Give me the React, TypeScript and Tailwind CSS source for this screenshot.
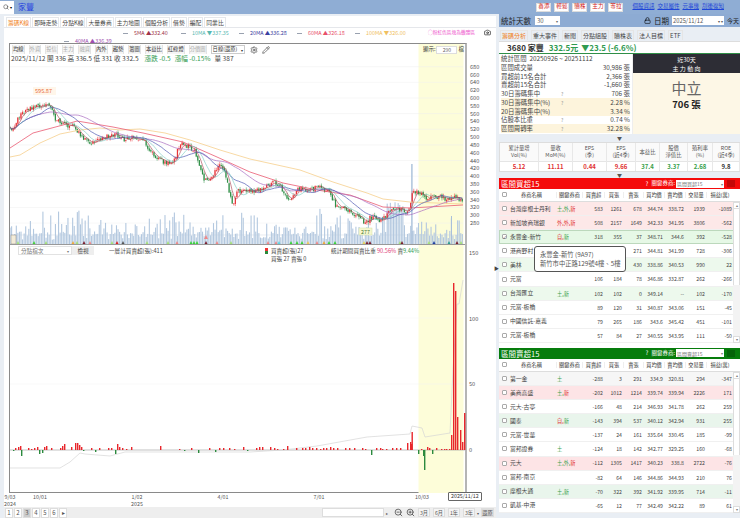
import { Search, Lock, Settings, Pencil, ZoomIn, ZoomOut, Camera } from "lucide-react";

// seeded random so the chart is the same on every load
let seed = 37;
const rnd = () => {
    seed = (seed * 16807) % 2147483647;
    return seed / 2147483647;
};

const interp = (pts: number[][], x: number) => {
    for (let i = 1; i < pts.length; i++) {
        if (x <= pts[i][0]) {
            const [x0, y0] = pts[i - 1];
            const [x1, y1] = pts[i];
            return y0 + ((y1 - y0) * (x - x0)) / (x1 - x0);
        }
    }
    return pts[pts.length - 1][1];
};

const pricePts = [
    [10, 130], [15, 124], [20, 116], [25, 112], [30, 108], [35, 105], [40, 108], [45, 104], [50, 106], [55, 118], [60, 122], [65, 125],
    [70, 125], [75, 127], [80, 135], [85, 140], [90, 143], [95, 143], [100, 140], [105, 137], [110, 136], [115, 134], [120, 138], [125, 140],
    [130, 137], [135, 138], [140, 140], [145, 142], [150, 150], [155, 155], [160, 160], [165, 162], [170, 163], [175, 160], [178, 148],
    [182, 143], [186, 145], [190, 148], [195, 150], [200, 170], [205, 180], [210, 178], [215, 172], [220, 165], [225, 172], [230, 195],
    [233, 206], [238, 190], [243, 192], [250, 190], [255, 192], [260, 190], [265, 188], [270, 185], [275, 182], [280, 187], [285, 195],
    [290, 198], [295, 192], [300, 188], [305, 190], [310, 190], [315, 188], [320, 187], [325, 190], [330, 192], [335, 205], [340, 208],
    [345, 210], [350, 212], [355, 215], [360, 218], [365, 224], [370, 218], [375, 218], [380, 220], [385, 218], [390, 210], [395, 207],
    [400, 210], [405, 212], [410, 208], [413, 190], [417, 192], [425, 198], [430, 196], [435, 198], [440, 195], [445, 200], [450, 200],
    [455, 198], [460, 200], [464, 202],
];
const ma60Pts = [[10, 148], [33, 133], [63, 125], [77, 121], [113, 127], [143, 133], [183, 142], [217, 157], [250, 172], [283, 183], [317, 190], [350, 195], [383, 207], [410, 208], [463, 205]];
const ma100Pts = [[10, 157], [20, 155], [40, 143], [60, 134], [80, 130], [100, 128], [120, 130], [140, 129], [165, 133], [190, 140], [220, 150], [250, 159], [300, 170], [333, 182], [367, 193], [383, 199], [410, 202], [463, 204]];

const bars = Array.from({ length: 290 }, (_, i) => {
    const x = 10 + i * 1.565;
    const c = interp(pricePts, x) + (rnd() - 0.5) * 5;
    return { x, c };
});
const candles = bars.map((b, i) => {
    const o = i === 0 ? b.c : bars[i - 1].c + (rnd() - 0.5) * 2;
    const top = Math.min(o, b.c) - rnd() * 2.5;
    const bot = Math.max(o, b.c) + rnd() * 2.5;
    const vol = i > 240 && i < 252 ? 28 + rnd() * 16 : 5 + rnd() * rnd() * 30 + rnd() * 6;
    return { x: b.x, o, c: b.c, top, bot, vol };
});
const maLine = (w: number) =>
    bars
        .map((b, i) => {
            const part = bars.slice(Math.max(0, i - w + 1), i + 1);
            return `${b.x.toFixed(1)},${(part.reduce((s, p) => s + p.c, 0) / part.length).toFixed(1)}`;
        })
        .join(" ");
const ptLine = (pts: number[][]) => pts.map((p) => p.join(",")).join(" ");

const markers: [number, string][] = [
    [18, "#a5e07a"], [34, "#44d13c"], [46, "#a5e07a"], [73, "#f2a93b"], [77, "#a5e07a"], [84, "#7a1f2e"], [90, "#e88"], [112, "#a5e07a"], [117, "#d22"], [123, "#555"],
    [147, "#a5e07a"], [168, "#a5e07a"], [177, "#e88"], [191, "#3ad33a"], [194, "#3ad33a"], [197, "#3ad33a"], [206, "#7a1f2e"], [217, "#e88"], [231, "#a5e07a"],
    [268, "#e88"], [276, "#e88"], [279, "#5cd3e0"], [291, "#3ad33a"], [297, "#3ad33a"], [302, "#3ad33a"], [308, "#f2c75a"], [317, "#e88"], [324, "#f2a93b"], [329, "#3ad33a"], [335, "#3ad33a"],
    [364, "#e8d45a"], [367, "#7a1f2e"], [370, "#7a1f2e"], [400, "#a5e07a"], [402, "#7a1f2e"], [429, "#a5e07a"], [434, "#1f3fa0"], [449, "#2a9d8f"], [457, "#7a1f2e"], [461, "#a5e07a"],
];

// broker net buy bars: x, height in px (negative goes down)
const netBars: [number, number][] = [
    [13, -1], [15, 2], [18, 3], [20, 4], [21, -6], [28, 2], [31, 1], [34, 2], [37, 3], [39, -4], [42, -3], [44, 3], [46, 4], [51, 2], [60, 2], [62, 4], [64, 6], [71, 3],
    [75, 7], [77, 7], [79, 5], [81, 3], [83, -1], [91, 2], [95, -2], [99, 2], [108, 2], [111, 2], [115, -4], [117, 6], [119, 3], [122, 2], [126, 1], [131, 3], [160, 4], [179, 1],
    [184, -1], [191, 2], [198, -3], [209, 2], [215, -2], [219, 2], [223, 2], [229, 2], [234, 1], [243, 3], [247, -1], [256, 2], [259, 3], [262, 3], [270, 3], [274, 2], [277, 1], [283, 1],
    [287, 4], [296, 2], [302, 2], [305, 2], [309, 3], [312, 2], [316, 2], [320, 1], [323, 2], [326, 2], [330, 3], [333, 2], [337, 2], [345, 2], [349, 2], [354, 2], [362, 2], [371, -5],
    [376, 2], [382, 1], [386, 1], [392, 2], [400, 2], [407, 7], [411, 6], [396, 2], [380, 2], [365, 1], [410, 8], [411.5, 18], [418, -4], [423, -6], [424, -20], [421, 1], [427, 3], [429, 2], [432, -4], [436, 2],
    [441, 1], [444, 1], [446, 1], [449, 1], [451, 15], [453, 167], [455, 159], [457, 33], [460, 20], [462, 8], [464, 37],
];
const grayLine = [[10, 468], [60, 468], [70, 462], [80, 453], [85, 454], [110, 456], [125, 452], [250, 452], [283, 450], [317, 446], [367, 437], [410, 434], [412, 426], [422, 428], [425, 437], [450, 433], [453, 370], [457, 304], [459, 304], [463, 280]];

const yUp = (p: number) => 66.7 + (680 - p) * 0.391;
const priceTicks = [680, 660, 640, 620, 600, 580, 560, 540, 520, 500, 480, 460, 440, 420, 400, 380, 360, 340, 320, 300, 280];

function ChartDrawing() {
    return (
        <svg className="absolute left-0 top-0" width={490} height={452} viewBox="10 44 490 452">
            <rect x={418.5} y={44} width={45} height={449} fill="#fdfdd9" />
            {[680, 640, 600, 560, 520, 480, 440, 400, 360, 320, 280].map((p) => (
                <line key={p} x1={10} x2={463} y1={yUp(p)} y2={yUp(p)} stroke="#eeeeee" strokeWidth={0.5} />
            ))}
            <line x1={10} x2={463} y1={384} y2={384} stroke="#f0f0f0" strokeWidth={0.5} />
            <line x1={10} x2={463} y1={318} y2={318} stroke="#f4f4f4" strokeWidth={0.5} />
            <line x1={10} x2={463} y1={235} y2={235} stroke="#d8dfe8" strokeWidth={0.6} />

            {candles.map((c, i) => (
                <rect key={i} x={c.x - 0.5} y={245 - c.vol} width={1.1} height={c.vol} fill="#b3c8df" />
            ))}
            <rect x={411.2} y={164} width={1.4} height={81} fill="#a9c0da" />
            <rect x={451} y={216} width={1} height={29} fill="#a9c0da" />
            <rect x={11} y={235} width={5} height={9} fill="#f3ecd8" stroke="#888" strokeWidth={0.5} />

            {candles.map((c, i) => {
                const up = c.c < c.o;
                const col = up ? "#e8353a" : "#2f8f47";
                return (
                    <g key={i}>
                        <line x1={c.x} x2={c.x} y1={c.top} y2={c.bot} stroke={col} strokeWidth={0.5} />
                        <rect x={c.x - 0.6} y={Math.min(c.o, c.c)} width={1.2} height={Math.max(0.5, Math.abs(c.o - c.c))} fill={col} />
                    </g>
                );
            })}
            <polyline points={ptLine(ma100Pts)} fill="none" stroke="#f6cf8d" strokeWidth={0.8} />
            <polyline points={ptLine(ma60Pts)} fill="none" stroke="#ea5a72" strokeWidth={0.8} />
            <polyline points={maLine(40)} fill="none" stroke="#a868c0" strokeWidth={0.7} />
            <polyline points={maLine(20)} fill="none" stroke="#4a55b0" strokeWidth={0.7} />
            <polyline points={maLine(10)} fill="none" stroke="#70c8c0" strokeWidth={0.6} />
            <polyline points={maLine(5)} fill="none" stroke="#a83a4a" strokeWidth={0.6} />

            {markers.map(([x, col], i) => (
                <polygon key={i} points={`${x - 2},245 ${x + 2},245 ${x},241`} fill={col} />
            ))}
            <polygon points="204,239 208,239 206,235" fill="#e88" />

            <g fontSize={5.6} fill="#555">
                {priceTicks.map((p) => (
                    <text key={p} x={470} y={yUp(p) + 2}>{p}</text>
                ))}
                <text x={469} y={255}>150</text>
                <text x={469} y={320.5}>100</text>
                <text x={469} y={386}>50</text>
                <text x={469} y={452}>0</text>
            </g>

            <rect x={33} y={87} width={23} height={8} fill="#fff6ea" />
            <text x={35} y={93} fontSize={5.6} fill="#e86a3a">595.87</text>
            <rect x={359} y={228} width={13} height={7} fill="#f7f7d0" stroke="#cfe0a8" strokeWidth={0.5} />
            <text x={361} y={233.5} fontSize={5.4} fill="#4a7a30">277</text>

            <line x1={10} x2={465} y1={450} y2={450} stroke="#999" strokeWidth={0.6} />
            <polyline points={ptLine(grayLine)} fill="none" stroke="#d6d6d6" strokeWidth={0.7} />
            {netBars.map(([x, h], i) => (
                <rect key={i} x={x} y={h > 0 ? 450 - h : 450} width={1.4} height={Math.abs(h)} fill={h > 0 ? "#e8262c" : "#2b8a3e"} />
            ))}
        </svg>
    );
}

const leftTabs = ["籌碼K線", "即時走勢", "分點K線", "大量券商", "主力地圖", "個股分析", "借勢", "編配", "同業比"];
const toolBtns = [
    ["均線", false], ["外資", true], ["投信", true], ["主力", true], ["融資", true], ["內外", false], ["趨勢", false], ["籌圖", false], ["本益比", false], ["紅綠燈", false], ["分價圖", true],
] as [string, boolean][];

function LegendItem({ name, val, color }: { name: string; val: string; color: string }) {
    return (
        <span className="flex items-center gap-[6px] w-[58px] h-[8px] leading-[8px]" style={{ color }}>
            <span className="w-[5px] h-px bg-gray-400 shrink-0" />
            <span className="whitespace-nowrap">{name} {val}</span>
        </span>
    );
}

function LeftPanel() {
    return (
        <div className="w-[492px] ml-[4px] bg-white flex flex-col h-[502px] relative">
            <div className="flex items-end gap-[1px] h-[12px] pl-[2px] text-[5.8px] leading-none border-b border-gray-200">
                {leftTabs.map((t, i) => (
                    <span key={t} className={`px-[1px] h-[10px] flex items-center border border-b-0 border-gray-200 whitespace-nowrap ${i === 0 ? "text-[#f08020]" : "text-[#444]"}`}>
                        {t}
                    </span>
                ))}
            </div>
            <div className="relative h-[15px] text-[5.4px]">
                <div className="flex pl-[119px] pt-[1px]">
                    <LegendItem name="5MA" val="▲332.40" color="#a0344a" />
                    <LegendItem name="10MA" val="▼337.35" color="#55b8b0" />
                    <LegendItem name="20MA" val="▲336.28" color="#3a40a0" />
                    <LegendItem name="60MA" val="▲326.18" color="#e8506a" />
                    <LegendItem name="100MA" val="▼326.00" color="#f0c060" />
                </div>
                <div className="pl-[60px]">
                    <LegendItem name="40MA" val="▲336.39" color="#a050b0" />
                </div>
                <span className="absolute left-[424px] top-[1px] text-[4.7px] leading-[7px] text-[#ee55cc] whitespace-nowrap">◯粉紅色區塊為攤體區</span>
                <Camera className="absolute left-[480px] top-[1px] w-[7px] h-[7px] text-black" />
            </div>

            {/* chart frame */}
            <div className="relative ml-[5px] w-[458px] h-[450px] border-l border-t border-b border-r-2 border-[#8a8a8a] border-r-[#b5b5b5]">
                <ChartDrawing />
                <div className="relative h-[201px] border-b border-[#999]">
                    <div className="flex items-center gap-[4px] pt-[1px] pl-[2px] text-[5.3px] leading-none">
                        {toolBtns.map(([t, off]) => (
                            <span key={t} className={`h-[9px] flex items-center bg-[#f5f5f5] border-x border-[#e3e3e3] whitespace-nowrap ${off ? "text-[#aaa]" : "text-[#333]"}`}>
                                {t}
                            </span>
                        ))}
                        <span className="w-[34px] h-[9px] flex items-center justify-between px-[1px] bg-white border border-[#ccc] text-[#333] whitespace-nowrap">
                            日線(還原)<span className="text-[4px]">▾</span>
                        </span>
                        <Settings className="w-[8px] h-[8px] ml-[1px] text-[#444]" />
                        <Pencil className="w-[8px] h-[8px] text-[#444]" />
                    </div>
                    <div className="flex gap-[3px] pl-[1px] mt-[0px] h-[9px] items-center text-[6.6px] leading-[9px] text-[#444] whitespace-nowrap">
                        <span>2025/11/12 開 336 高 336.5 低 331 收 332.5</span>
                        <span className="ml-[3px] text-[#2f9a50]">漲跌 -0.5</span>
                        <span className="ml-[1px] text-[#2f9a50]">漲幅 -0.15%</span>
                        <span className="ml-[1px]">量 387</span>
                    </div>
                    <div className="absolute right-[1px] top-[1px] flex items-center gap-[1px] text-[5.5px] leading-[9px] text-[#333]">
                        顯示:
                        <span className="w-[21px] h-[8px] bg-white border border-[#ddd] flex items-center justify-center text-[5px] text-[#666]">290</span>
                        檔
                    </div>
                </div>
                <div className="relative flex items-start h-[14px] pt-[1px] text-[5.6px] leading-[8px] text-[#444] whitespace-nowrap">
                    <span className="ml-[8px] w-[54px] h-[9px] flex items-center justify-between px-[2px] bg-white border border-[#e2e2e2] text-[#777]">
                        分點檔次<span className="text-[4px]">▾</span>
                    </span>
                    <span className="w-[22px] h-[9px] flex items-center justify-center bg-[#eeeeee]">檢視</span>
                    <span className="ml-[15px] mt-[1px]">一層計買賣超(張):411</span>
                    <span className="absolute left-[261px] top-[2px]">
                        買賣超(張)27
                        <br />
                        買張 27 賣張 0
                    </span>
                    <span className="absolute left-[321px] top-[2px]">
                        統計期間買賣比重 <span className="text-[#e0457a]">90.56%</span> 賣<span className="text-[#2f9a50]">9.44%</span>
                    </span>
                    <span className="absolute left-[255px] top-[3px] flex flex-col">
                        <span className="w-[3px] h-[3px] bg-[#e33]" />
                        <span className="w-[3px] h-[3px] bg-[#2a8a3a]" />
                    </span>
                </div>
            </div>

            {/* date axis */}
            <div className="relative h-[14px] text-[5.3px] text-[#555] leading-[7px]">
                <div className="flex pt-[1px]">
                    <span className="w-[20px] text-center ml-[-4px]">9/03<br />2024</span>
                    <span className="w-[20px] text-center ml-[10px]">10/01</span>
                    <span className="w-[20px] text-center ml-[77px]">1/02<br />2025</span>
                    <span className="w-[20px] text-center ml-[66px]">4/01</span>
                    <span className="w-[20px] text-center ml-[76px]">7/01</span>
                    <span className="w-[20px] text-center ml-[83px]">10/03</span>
                </div>
                <span className="absolute left-[444px] top-[-1px] px-[2px] h-[9px] flex items-center bg-white border border-[#666] text-[#333] rounded-[1px] whitespace-nowrap">2025/11/12</span>
            </div>

            {/* pager */}
            <div className="flex items-center justify-between h-[11px] bg-[#eeeeee] text-[6px] leading-none text-[#555] pl-[1px] pr-[2px]">
                <div className="flex gap-[1px]">
                    {["1", "2", "3", "4", "5", "6", "▸"].map((p, i) => (
                        <span key={p} className={`w-[8px] h-[10px] flex items-center justify-center border border-[#ddd] ${i === 2 ? "bg-[#ccc]" : "bg-white"}`}>{p}</span>
                    ))}
                </div>
                <div className="flex items-center gap-[2px] whitespace-nowrap">
                    <span className="w-[62px] h-[9px] bg-white border border-[#ddd]" />
                    <span className="w-[4px] text-[4px]">▸</span>
                    <ZoomOut className="w-[9px] h-[9px] text-[#444] ml-[2px]" />
                    <ZoomIn className="w-[9px] h-[9px] text-[#444] ml-[1px]" />
                    {["3月", "6月", "1年", "3年"].map((t) => (
                        <span key={t} className="w-[12px] h-[9px] ml-[1px] flex items-center justify-center border border-[#ddd] bg-[#f4f4f4] text-[5.2px]">{t}</span>
                    ))}
                    <span className="text-[4px]">▾</span>
                    <span className="w-[13px] h-[9px] flex items-center justify-center bg-[#dddddd] text-[5.2px]">還原</span>
                </div>
            </div>
        </div>
    );
}

type Row = { name: string; tags: [string, string][]; v: string[]; bg?: string; checked?: boolean };
const G = "#37a04a";
const R = "#e03030";

const buyRows: Row[] = [
    { name: "台灣摩根士丹利", tags: [["土,外,", G], ["新", R]], v: ["583", "1261", "678", "344.74", "338.72", "1939", "-1089"], bg: "#fde8e8" },
    { name: "新加坡商瑞銀", tags: [["外,外,", R], ["新", R]], v: ["508", "2157", "1649", "342.33", "341.95", "3806", "-562"], bg: "#fde8e8" },
    { name: "永豐金-新竹", tags: [["自,", R], ["新", G]], v: ["318", "355", "37", "348.71", "344.6", "392", "-528"], bg: "#e6f8e6", checked: true },
    { name: "港商野村", tags: [], v: ["", "", "271", "344.81", "341.99", "728", "-306"] },
    { name: "美林", tags: [], v: ["", "", "430", "338.86", "340.53", "990", "22"], bg: "#edf9ed" },
    { name: "元富", tags: [], v: ["106", "184", "78", "346.86", "332.87", "262", "-266"] },
    { name: "台灣匯立", tags: [["土,新", G]], v: ["102", "102", "0", "349.14", "--", "102", "-170"], bg: "#edf9ed" },
    { name: "元富-板橋", tags: [], v: ["89", "120", "31", "340.87", "343.06", "151", "-45"] },
    { name: "中國信託-嘉義", tags: [], v: ["79", "265", "186", "343.6", "345.42", "451", "-101"] },
    { name: "元富-板橋", tags: [], v: ["57", "84", "27", "340.55", "343.95", "111", "-50"] },
];
const sellRows: Row[] = [
    { name: "第一金", tags: [["土", G]], v: ["-288", "3", "291", "334.9", "320.81", "294", "-347"], bg: "#f6f6f6" },
    { name: "美商高盛", tags: [["土,", G], ["新", R]], v: ["-202", "1012", "1214", "339.74", "339.94", "2226", "171"], bg: "#fde4e6" },
    { name: "元大-古亭", tags: [], v: ["-166", "48", "214", "346.93", "341.78", "262", "259"] },
    { name: "國泰", tags: [["自,", R], ["新", G]], v: ["-143", "394", "537", "340.12", "342.94", "931", "255"], bg: "#e9f5ec" },
    { name: "元富-世華", tags: [], v: ["-137", "24", "161", "335.64", "330.45", "185", "-99"] },
    { name: "富邦證券", tags: [["土", G]], v: ["-124", "18", "142", "342.77", "329.25", "160", "-68"] },
    { name: "元大", tags: [["土,外,", G], ["新", R]], v: ["-112", "1305", "1417", "340.23", "338.8", "2722", "-76"], bg: "#fde4e6" },
    { name: "富邦-南京", tags: [], v: ["-82", "64", "146", "344.86", "344.93", "210", "76"] },
    { name: "摩根大通", tags: [["土,新", G]], v: ["-70", "322", "392", "341.92", "339.95", "714", "-11"], bg: "#e9f5ec" },
    { name: "凱基-中港", tags: [], v: ["-65", "12", "77", "342.49", "342.22", "89", "61"] },
];

const GRID = "grid grid-cols-[57px_26px_22px_19px_20px_21px_21px_21px_27px]";

function BrokerTable({ title, rows, color, select }: { title: string; rows: Row[]; color: string; select: string }) {
    return (
        <div>
            <div className="flex items-center h-[11px] pl-[2px] text-white text-[7.5px] leading-none whitespace-nowrap" style={{ background: color }}>
                {title}
                <span className="ml-auto text-[6px]">?</span>
                <span className="ml-[3px] text-[5.5px]">關鍵券商:</span>
                <span className="w-[48px] h-[8px] ml-[1px] mr-[3px] bg-white text-[#777] text-[5px] flex items-center justify-between px-[1px]">
                    {select}<span className="text-[4px]">▾</span>
                </span>
                <span className="w-[8px] h-[7px] mr-[5px] bg-black/20" />
            </div>
            <div className={`${GRID} h-[13px] items-center text-[5.2px] leading-none text-[#333] border-b border-[#ddd] pr-[7px] bg-white`}>
                <span className="flex items-center">
                    <span className="w-[5px] h-[5px] ml-[3px] border border-[#aaa] rounded-[1px]" />
                    <span className="flex-1 text-center">券商名稱</span>
                </span>
                {["關鍵券商", "買賣超", "買張", "賣張", "買均價", "賣均價", "交易量", "損益(萬)"].map((h) => (
                    <span key={h} className="text-center whitespace-nowrap border-l border-[#eee]">{h}</span>
                ))}
            </div>
            <div className="relative">
                {rows.map((r, i) => (
                    <div key={i} className={`${GRID} h-[14.1px] items-center text-[5.2px] leading-none text-[#444] pr-[7px] border-b border-[#f0f0f0] ${r.checked ? "outline outline-[#bcd8bc] -outline-offset-1" : ""}`} style={{ background: r.bg ?? "#fff" }}>
                        <span className="flex items-center whitespace-nowrap text-[5.8px]">
                            <span className="w-[5px] h-[5px] ml-[3px] mr-[3px] border border-[#aaa] rounded-[1px] bg-white text-[4px] leading-[4px] text-center shrink-0">{r.checked ? "✓" : ""}</span>
                            {r.name}
                        </span>
                        <span className="pl-[1px]">
                            {r.tags.map(([t, c], k) => (
                                <span key={k} style={{ color: c }}>{t}</span>
                            ))}
                        </span>
                        {r.v.map((v, k) => (
                            <span key={k} className="text-right pr-[1px]">{v}</span>
                        ))}
                    </div>
                ))}
                <div className="absolute right-0 top-0 bottom-0 w-[7px] bg-[#f3f3f3] flex flex-col">
                    <span className="h-[7px] bg-white border border-[#ddd] text-[4px] text-center leading-[5px] text-[#777]">▴</span>
                    <span className="h-[76px] bg-white border-x border-[#ddd]" />
                    <span className="mt-auto h-[7px] bg-white border border-[#ddd] text-[4px] text-center leading-[5px] text-[#777]">▾</span>
                </div>
            </div>
        </div>
    );
}

const stats: [string, string, string?, boolean?][] = [
    ["區間成交量", "30,986 張"],
    ["買超前15名合計", "2,366 張"],
    ["賣超前15名合計", "-1,660 張"],
    ["30日籌碼集中", "706 張", "?"],
    ["30日籌碼集中(%)", "2.28 %", "?", true],
    ["20日籌碼集中(%)", "3.34 %", "", true],
    ["佔股本比重", "0.74 %", "?"],
    ["區間周轉率", "32.28 %", "?", true],
];
const metrics = [
    ["累計量增", "Vol(%)", "5.12", R, 39],
    ["量收", "MoM(%)", "11.11", R, 34],
    ["EPS", "(季)", "0.44", R, 34],
    ["EPS", "(近4季)", "9.66", R, 29],
    ["本益比", "", "37.4", G, 24],
    ["股價", "淨值比", "3.37", G, 28],
    ["殖利率", "(%)", "2.68", G, 25],
    ["ROE", "(近4季)", "9.8", "#333", 27],
] as [string, string, string, string, number][];

function RightPanel() {
    return (
        <div className="flex-1 min-w-0 flex flex-col">
            <div className="flex items-center gap-[3px] h-[13px] pl-[2px] pr-[1px] bg-[#8dabd3] text-[7.5px] leading-none text-[#222] whitespace-nowrap">
                統計天數
                <span className="w-[25px] h-[9px] ml-[1px] px-[2px] bg-white text-[6px] text-[#666] flex items-center justify-between">
                    30<span className="text-[4px]">▾</span>
                </span>
                <Lock className="w-[7px] h-[7px] ml-auto text-black" />
                日期
                <span className="w-[52px] h-[9px] px-[1px] bg-white text-[5.8px] text-[#555] flex items-center justify-between">
                    2025/11/12<span className="text-[4px]">▾ ▾</span>
                </span>
                <span className="text-[6px]">今天</span>
            </div>
            <div className="flex items-center gap-[3px] h-[12px] mt-[2px] pl-[1px] text-[6px] leading-none text-[#444] whitespace-nowrap">
                {["籌碼分析", "重大事件", "新聞", "分點組股", "贖株表", "法人目標", "ETF"].map((t, i) => (
                    <span key={t} className={`px-[1px] h-[10px] flex items-center border border-b-0 border-[#e5e5e5] ${i === 0 ? "text-[#f08020]" : ""}`}>{t}</span>
                ))}
            </div>
            <div className="h-[13px] flex items-center gap-[5px] pl-[8px] border-b border-b-[#2f8f47] border-t border-t-[#ddd] text-[8px] leading-none font-bold whitespace-nowrap bg-white">
                <span className="text-[#333]">3680 家豐</span>
                <span className="text-[#2f9a50]">332.5元</span>
                <span className="text-[#2f9a50] -ml-[2px]">▼23.5 (-6.6%)</span>
            </div>
            <div className="flex h-[80px]">
                <div className="w-[134px] pl-[2px] pr-[2px] bg-white text-[6.4px] text-[#444] leading-[9px] border-r border-[#eee]">
                    <div className="h-[8.8px] whitespace-nowrap">統計區間&nbsp; 20250926 ~ 20251112</div>
                    {stats.map(([k, v, q, hl]) => (
                        <div key={k} className={`flex h-[8.8px] items-center whitespace-nowrap relative ${hl ? "bg-[#fdf4dc]" : ""}`}>
                            {k}
                            {q && <span className="absolute left-[60px] text-[5px] text-[#999]">?</span>}
                            <span className="ml-auto">{v}</span>
                        </div>
                    ))}
                </div>
                <div className="flex-1 flex flex-col bg-[#fdf7e6]">
                    <div className="h-[19px] bg-[#2d2d35] text-white text-[6px] leading-[9px] flex flex-col items-center justify-center">
                        <span>近30天</span>
                        <span>主 力 動 向</span>
                    </div>
                    <div className="flex-1 flex flex-col items-center pt-[5px]">
                        <span className="text-[15px] leading-[20px] text-[#666]">中立</span>
                        <span className="text-[9.5px] leading-[12px] font-bold text-[#222]">706 張</span>
                    </div>
                </div>
            </div>
            <div className="h-[8px] text-center text-[5px] leading-[8px] text-[#555]">▼</div>
            <div className="flex mx-0 border border-[#ddd] bg-white">
                {metrics.map(([a, b, val, col, w], i) => (
                    <div key={i} className="flex flex-col border-r border-[#e8e8e8] shrink-0" style={{ width: w }}>
                        <div className="h-[19px] flex flex-col items-center justify-center text-[5.3px] leading-[7px] text-[#555] bg-[#fafafa] border-b border-[#e5e5e5]">
                            <span>{a}</span>
                            {b && <span>{b}</span>}
                        </div>
                        <div className="h-[9px] flex items-center justify-center text-[6px] font-bold" style={{ color: col }}>{val}</div>
                    </div>
                ))}
            </div>
            <div className="h-[6px] text-center text-[5px] leading-[6px] text-[#555]">▼</div>
            <BrokerTable title="區間買超15" rows={buyRows} color="#f40b0b" select="區間買超15" />
            <div className="h-[5px] bg-white" />
            <BrokerTable title="區間賣超15" rows={sellRows} color="#067c0c" select="區間賣超15" />
        </div>
    );
}

export default function App() {
    return (
        <div className="relative w-[740px] h-[518px] overflow-hidden bg-[#e9eef4] font-['Noto_Sans_CJK_TC','Noto_Sans',sans-serif]">
            {/* top bar */}
            <div className="flex items-center h-[14px] bg-[#8fadd4]">
                <span className="w-[14px] h-[13px] bg-white flex items-center justify-center gap-[1px]">
                    <Search className="w-[6px] h-[6px] text-[#333]" />
                    <span className="text-[4px]">▾</span>
                </span>
                <span className="ml-[4px] text-[8px] leading-none text-[#1f3fe0]">家豐</span>
                <div className="flex ml-auto gap-[3px] text-[5.6px] leading-none text-[#d02020]">
                    {["審添", "輕鬆", "贖株", "主力", "等拉"].map((t) => (
                        <span key={t} className="w-[15px] h-[9px] bg-white border border-[#ddd] flex items-center justify-center">{t}</span>
                    ))}
                </div>
                <div className="flex ml-[9px] mr-[16px] gap-[3px] text-[5.5px] leading-none text-[#1e46d8] underline whitespace-nowrap">
                    <span>個股資訊</span>
                    <span>交易屬性</span>
                    <span>元事幾</span>
                    <span>刮後復知</span>
                </div>
            </div>
            <div className="flex h-[504px] items-start">
                <div className="w-[499px] shrink-0 flex pt-[2px] relative">
                    <LeftPanel />
                    <span className="absolute left-[494px] top-[250px] text-[5px] text-[#444]">▶</span>
                </div>
                <RightPanel />
            </div>
            {/* tooltip over the table */}
            <div className="absolute left-[534px] top-[246px] w-[92px] h-[26px] pl-[5px] pt-[3px] bg-white border border-[#555] rounded-[3px] text-[6.3px] leading-[9px] text-[#555] whitespace-nowrap">
                永豐金-新竹 (9A97)
                <br />
                新竹市中正路129號4樓、5樓
            </div>
        </div>
    );
}
